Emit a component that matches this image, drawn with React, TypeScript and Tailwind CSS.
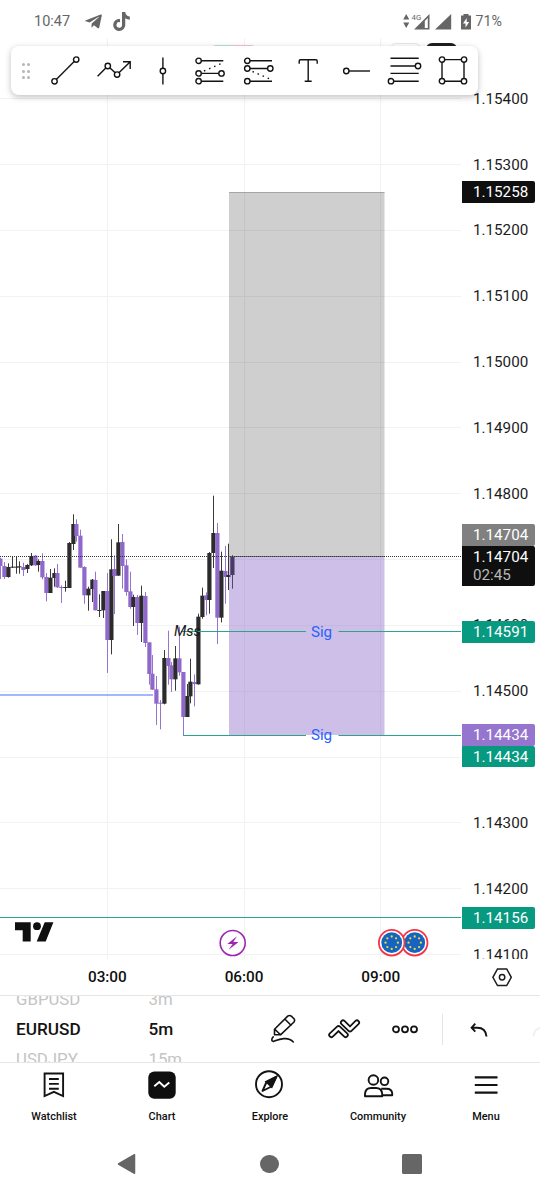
import React from 'react';
import { FaTelegramPlane } from 'react-icons/fa';
import { FaTiktok } from 'react-icons/fa6';

// --- CHART DATA ---
// [isUp, bodyTop, bodyBottom, high, low], in thirds of a pixel below CANDLE_BASE
type Candle = [number, number, number, number, number];

const CANDLES: Candle[] = [
    [0, 236, 258, 233, 297], [0, 258, 291, 246, 297], [1, 261, 291, 250, 293], [1, 260, 263, 230, 264],
    [1, 260, 263, 231, 281], [1, 259, 262, 244, 281], [0, 261, 270, 248, 288], [1, 255, 267, 252, 279],
    [1, 228, 256, 219, 258], [0, 227, 256, 225, 258], [1, 243, 255, 238, 275], [0, 243, 292, 220, 298],
    [0, 291, 339, 279, 364], [1, 293, 339, 267, 339], [1, 279, 294, 265, 320], [0, 279, 322, 252, 324],
    [0, 321, 324, 316, 369], [1, 321, 324, 302, 335], [1, 189, 324, 186, 324], [1, 132, 192, 103, 210],
    [0, 132, 168, 118, 185], [0, 167, 263, 149, 263], [0, 261, 346, 259, 371], [1, 326, 346, 320, 392],
    [1, 299, 327, 297, 366], [0, 300, 391, 275, 391], [1, 390, 393, 343, 411], [1, 333, 391, 333, 414],
    [0, 333, 480, 279, 579], [1, 268, 480, 178, 523], [0, 267, 288, 226, 402], [1, 187, 287, 132, 287],
    [0, 186, 258, 162, 326], [0, 256, 336, 238, 347], [0, 334, 381, 275, 386], [1, 351, 381, 344, 438],
    [0, 351, 429, 345, 465], [1, 347, 429, 317, 486], [0, 348, 489, 336, 501], [0, 487, 582, 487, 614],
    [0, 581, 629, 525, 630], [0, 628, 671, 588, 735], [0, 668, 671, 660, 748], [1, 534, 671, 510, 673],
    [0, 534, 558, 452, 614], [0, 556, 598, 546, 636], [1, 535, 598, 498, 632], [0, 535, 577, 440, 587],
    [0, 576, 711, 576, 768], [1, 648, 711, 612, 711], [1, 605, 649, 536, 670], [0, 606, 612, 583, 679],
    [1, 410, 613, 401, 614], [1, 347, 411, 323, 416], [0, 346, 360, 337, 406], [1, 219, 360, 216, 401],
    [1, 159, 219, 47, 264], [0, 159, 413, 129, 492], [1, 272, 413, 215, 427], [0, 273, 291, 198, 371],
    [1, 285, 291, 191, 330], [1, 229, 285, 226, 326],
];

const CANDLE_BASE = 480;
const CANDLE_STEP = 3.8;
const toY = (v: number) => CANDLE_BASE + v / 3;

const PRICES = [
    '1.15400', '1.15300', '1.15200', '1.15100', '1.15000', '1.14900', '1.14800',
    '1.14700', '1.14600', '1.14500', '1.14400', '1.14300', '1.14200', '1.14100',
];
const GRID_X = [107, 244, 380];

const EuFlag: React.FC<{ cx: number }> = ({ cx }) => (
    <g>
        <circle cx={cx} cy={942.7} r={12.8} fill="#fff" stroke="#f23645" strokeWidth={1.8} />
        <circle cx={cx} cy={942.7} r={10.4} fill="#1565c0" />
        {[0, 1, 2, 3, 4, 5, 6, 7].map(i => (
            <circle
                key={i}
                cx={cx + 6.2 * Math.cos((i * Math.PI) / 4)}
                cy={942.7 + 6.2 * Math.sin((i * Math.PI) / 4)}
                r={1.15}
                fill="#f5d33b"
            />
        ))}
    </g>
);

const Plot: React.FC = () => (
    <svg className="block h-[921px] w-[462px] shrink-0" viewBox="0 38 462 921">
        {/* Grid */}
        {PRICES.map((p, i) => (
            <rect key={p} x={0} y={Math.round(98.3 + i * 65.83)} width={461} height={1} fill="#f2f2f2" />
        ))}
        {GRID_X.map(x => (
            <rect key={x} x={x} y={38} width={1} height={921} fill="#f2f2f2" />
        ))}

        {/* Candles */}
        {CANDLES.map(([up, top, bottom, high, low], i) => {
            const x = Math.floor(0.95 + i * CANDLE_STEP);
            return (
                <g key={i}>
                    <rect x={x} y={toY(high)} width={1} height={(low - high) / 3} fill={up ? '#3a3a3a' : '#9575cd'} />
                    <rect x={x - 1.7} y={toY(top)} width={4.2} height={(bottom - top) / 3} fill={up ? '#2b2b2b' : '#9068cc'} />
                </g>
            );
        })}

        {/* Position box */}
        <rect x={229} y={192} width={155.5} height={365} fill="#0f0f0f" fillOpacity={0.2} />
        <rect x={229} y={192} width={155.5} height={1} fill="#8a8a8a" fillOpacity={0.6} />
        <rect x={229} y={557} width={155.5} height={178} fill="#7e57c2" fillOpacity={0.38} />
        <rect x={229} y={556} width={155.5} height={1} fill="#777" />
        <line x1={0} x2={461} y1={556.5} y2={556.5} stroke="#333" strokeWidth={1} strokeDasharray="1 1" />

        {/* Levels */}
        <rect x={0} y={694.5} width={153} height={1} fill="#4673fb" />
        <path d="M181 631.5H306M338.5 631.5H461M183 735.5H306M338.5 735.5H461M0 917.5H461" stroke="#2ba48d" strokeWidth={1.1} />
        <text x={321.5} y={637} textAnchor="middle" fontSize={15.2} fill="#2962ff" fontFamily="Roboto, sans-serif">Sig</text>
        <text x={321.5} y={740.4} textAnchor="middle" fontSize={15.2} fill="#2962ff" fontFamily="Roboto, sans-serif">Sig</text>
        <text x={174} y={635.5} fontSize={14.5} fontStyle="italic" fill="#1a1a1a" fontFamily="Roboto, sans-serif">Mss</text>

        {/* Logo */}
        <g fill="#0f0f0f">
            <path d="M15 922.3H30.7V941.5H22.7V930.3H15ZM44.7 922.3H53.4L45.7 941.5H36.7Z" />
            <circle cx={37} cy={926.2} r={3.9} />
        </g>

        {/* Events */}
        <circle cx={232.7} cy={943} r={12.5} fill="#fff" stroke="#9c27b0" strokeWidth={1.6} />
        <path d="M237 936.3L227.3 944H232.6L228.6 949.8L238.6 942H233.3Z" fill="#9c27b0" />
        <EuFlag cx={414.7} />
        <EuFlag cx={391.7} />
    </svg>
);

const BADGES = [
    { cls: 'top-[143px] h-[22px] bg-[#0f0f0f]', price: '1.15258' },
    { cls: 'top-[486px] h-[22px] bg-[#808080]', price: '1.14704' },
    { cls: 'top-[508px] h-[40px] bg-[#0f0f0f]', price: '1.14704', timer: '02:45' },
    { cls: 'top-[583px] h-[22px] bg-[#089981]', price: '1.14591' },
    { cls: 'top-[686px] h-[22px] bg-[#9575cd]', price: '1.14434' },
    { cls: 'top-[708px] h-[21px] bg-[#089981]', price: '1.14434' },
    { cls: 'top-[869px] h-[22px] bg-[#089981]', price: '1.14156' },
];

const PriceAxis: React.FC = () => (
    <div className="relative h-full w-[78px] overflow-hidden bg-white pt-[28.5px] text-[15.2px] text-[#1c1c1c]">
        {PRICES.map(p => (
            <div key={p} className="flex h-[65.83px] items-center pl-[11px] leading-none">
                <span>{p === '1.14700' || p === '1.14400' ? '' : p}</span>
            </div>
        ))}
        {BADGES.map((b, i) => (
            <div key={i} className={`absolute left-0 w-[72.5px] rounded-r-[2px] pl-[11px] leading-[23.5px] text-white ${b.cls}`}>
                {b.price}
                {b.timer && <div className="-mt-[5.5px] text-[#b8b8b8]">{b.timer}</div>}
            </div>
        ))}
    </div>
);

// --- STATUS BAR ---
const StatusBar: React.FC = () => (
    <div className="flex h-[38px] shrink-0 items-center pt-[5px] pl-[34px] text-[14.5px] text-[#666]">
        <span className="w-[50px]">10:47</span>
        <FaTelegramPlane className="h-[19px] w-[19px]" />
        <FaTiktok className="ml-[8.5px] h-[19px] w-[19px]" />
        <svg className="ml-[272px] h-5 w-[73px] shrink-0" viewBox="0 0 73 20" fill="#666">
            <path d="M3.2 2L6.3 7.6H.2ZM3.2 16L6.3 10.4H.2Z" />
            <path d="M11 17.5L26.5 2V17.5ZM21.8 9V16H24.8V6Z" fillRule="evenodd" />
            <path d="M32 17.5H48.2V2Z" />
            <path d="M60.5 2H65.5V3.6H68V17.5H58V3.6H60.5Z" />
            <path d="M63.7 6L60 11.5H62.5V15.5L66.2 10H63.7Z" fill="#fff" />
            <text x={8.5} y={7.6} fontSize={7.8} fontFamily="Roboto, sans-serif">4G</text>
        </svg>
        <span className="text-[14.2px]">71%</span>
    </div>
);

// --- DRAWING TOOLBAR ---
const Dot: React.FC<{ x: number, y: number }> = ({ x, y }) => (
    <circle cx={x} cy={y} r={2.7} fill="#fff" />
);

const TOOLS: React.ReactNode[] = [
    <><path d="M3.5 24.3L25.2 2.6" /><Dot x={3.5} y={24.3} /><Dot x={25.2} y={2.6} /></>,
    <><path d="M-1.4 19.3L8.8 9L18.1 17.6L31 5M24 4.8H31.2V12" /><Dot x={8.8} y={9} /><Dot x={18.1} y={17.6} /></>,
    <><path d="M14.9 .6V27.6" /><Dot x={14.9} y={14} /></>,
    <>
        <path d="M2.6 3.8H27.3M2.6 16.4H25.5M2.6 24.2H27.3" />
        <path d="M8 14L27 5.8" strokeDasharray="1.5 4" />
        <Dot x={2.6} y={3.8} /><Dot x={2.6} y={16.4} /><Dot x={25.5} y={16.4} /><Dot x={2.6} y={24.2} />
    </>,
    <>
        <path d="M2.3 3.8H27M2.3 11.5H25.3M2.3 24.2H27" />
        <path d="M7.5 14.5L26 22.5" strokeDasharray="1.5 4" />
        <Dot x={2.3} y={3.8} /><Dot x={2.3} y={11.5} /><Dot x={25.3} y={11.5} /><Dot x={2.3} y={24.2} />
    </>,
    <path d="M6.2 6.8V4Q6.2 2.8 7.4 2.8H23Q24.2 2.8 24.2 4V6.8M15.2 2.8V24.2M11.7 24.2H18.7" />,
    <><path d="M5.3 14H29" /><Dot x={5.3} y={14} /></>,
    <><path d="M.5 1.2H28.7M.5 9H28M.5 16.4H28.7M1 24.2H28.7" /><Dot x={28} y={9} /><Dot x={1} y={24.2} /></>,
    <><path d="M4 2.6H26V24.2H4Z" /><Dot x={4} y={2.6} /><Dot x={26} y={2.6} /><Dot x={26} y={24.2} /><Dot x={4} y={24.2} /></>,
];

const DrawingToolbar: React.FC = () => (
    <div className="absolute top-[46px] left-[11px] flex h-[49px] w-[467px] items-center rounded-lg bg-white pt-[1.5px] pl-[10px] shadow-[0_2px_6px_rgba(0,0,0,0.25)]">
        <div className="mr-[20px] grid h-[16px] w-[10px] grid-cols-2 content-between justify-between">
            {[0, 1, 2, 3, 4, 5].map(i => (
                <span key={i} className="h-[3px] w-[3px] justify-self-center rounded-full bg-[#b5b5b5]" />
            ))}
        </div>
        <div className="flex gap-[20.4px]">
            {TOOLS.map((tool, i) => (
                <svg key={i} className="h-7 w-7 shrink-0 overflow-visible" viewBox="0 0 28 28" fill="none" stroke="#131313" strokeWidth={1.4}>
                    {tool}
                </svg>
            ))}
        </div>
    </div>
);

// --- TIME AXIS ---
const TimeAxis: React.FC = () => (
    <div className="flex h-[36px] shrink-0 items-center pt-[1.5px] text-[15.3px] font-medium text-[#0f0f0f]">
        <span className="ml-[39px] w-[136.7px] text-center">03:00</span>
        <span className="w-[136.7px] text-center">06:00</span>
        <span className="w-[136.7px] text-center">09:00</span>
        <svg className="mb-px ml-[42.5px] h-5 w-5" viewBox="0 0 20 20" fill="none" stroke="#1c1c1c" strokeWidth={1.5}>
            <path d="M5.5 2H14.7L19.3 10.3L14.7 18.5H5.5L.9 10.3Z" />
            <circle cx={10.1} cy={10.3} r={2.7} />
        </svg>
    </div>
);

// --- SYMBOL BAR ---
const Wheel: React.FC<{ items: string[], width: string }> = ({ items, width }) => (
    <div className={`flex h-full shrink-0 flex-col justify-center leading-[30px] whitespace-nowrap ${width}`}>
        <span className="text-[16.8px] text-[#c4c4c4]">{items[0]}</span>
        <span className="text-[17.2px] font-medium text-[#131313]">{items[1]}</span>
        <span className="text-[16.8px] text-[#c4c4c4]">{items[2]}</span>
    </div>
);

const SymbolBar: React.FC = () => (
    <div className="flex h-[68px] shrink-0 items-center overflow-hidden border-y border-[#e6e6e6] pl-4">
        <Wheel items={['GBPUSD', 'EURUSD', 'USDJPY']} width="w-[132.5px]" />
        <Wheel items={['3m', '5m', '15m']} width="w-[121.5px]" />
        <svg className="mb-0.5 h-7 w-7 shrink-0 overflow-visible" viewBox="0 0 28 28" fill="none" stroke="#131313" strokeWidth={1.6} strokeLinecap="round" strokeLinejoin="round">
            <path d="M4.5 20.8V15.2L17.7 2.1Q19.5 .8 21.3 2.1L24 4.8Q25.2 6.3 24 8L10.5 20.8ZM14.8 5L21 11.2M4.8 15.2L10.5 20.8" />
            <path d="M3.2 22.9C1 25 1.5 28 4 27.2C9 25.4 18 22 23.3 28" />
        </svg>
        <svg className="mb-0.5 ml-8 h-7 w-7 shrink-0 overflow-visible" viewBox="0 0 28 28" fill="none" strokeLinecap="round" strokeLinejoin="round">
            <path d="M13 8.5L20 15.3L27 8.5" stroke="#131313" strokeWidth={6} />
            <path d="M13 8.5L20 15.3L27 8.5" stroke="#fff" strokeWidth={2.5} />
            <path d="M1.3 21L8.5 14.2L15.7 21" stroke="#131313" strokeWidth={6} />
            <path d="M1.3 21L8.5 14.2L15.7 21" stroke="#fff" strokeWidth={2.5} />
        </svg>
        <svg className="mb-px ml-[33px] h-7 w-7 shrink-0" viewBox="0 0 28 28" fill="none" stroke="#131313" strokeWidth={1.8}>
            <circle cx={5} cy={14.3} r={3} />
            <circle cx={14} cy={14.3} r={3} />
            <circle cx={23} cy={14.3} r={3} />
        </svg>
        <div className="ml-[22.5px] h-[31px] w-px shrink-0 bg-[#e4e4e4]" />
        <svg className="ml-[25.5px] h-7 w-7 shrink-0" viewBox="0 0 28 28" fill="none" stroke="#131313" strokeWidth={1.9}>
            <path d="M7.3 8.7L3.6 12.7L7.3 16.6M3.8 12.7H9.3C15.3 12.7 18 15.5 18.5 21.5" />
        </svg>
        <svg className="ml-[36px] h-7 w-7 shrink-0" viewBox="0 0 28 28" fill="none" stroke="#f0f0f0" strokeWidth={1.9}>
            <path d="M1.5 21.5C2 15.5 5.5 12.7 11.5 12.7H17" />
        </svg>
    </div>
);

// --- BOTTOM NAV ---
const NAV: { label: string, icon: React.ReactNode }[] = [
    {
        label: 'Watchlist',
        icon: <path d="M4.6 2.5H23.1V25L13.9 20.9L4.6 25ZM9 8H18.8M9 12.9H18.8M9 17.8H18.8" />,
    },
    {
        label: 'Chart',
        icon: <><rect x={.3} y={.5} width={27.4} height={27.3} rx={6} fill="#0f0f0f" stroke="none" /><path d="M6.3 15.3L11.3 11L16.3 15.7L21.3 11.5" stroke="#fff" /></>,
    },
    {
        label: 'Explore',
        icon: <><circle cx={13} cy={13.2} r={13} /><path d="M20 6L10.5 11L6.5 20L15.5 15.5Z" strokeLinejoin="round" /><path d="M20.5 5.5L10.2 10.8L15.7 15.9Z" fill="#131313" /></>,
    },
    {
        label: 'Community',
        icon: (
            <>
                <circle cx={9.4} cy={9} r={4.8} />
                <circle cx={20.5} cy={10.3} r={3.8} />
                <path d="M1 25.3V23Q1.4 17 7 17H12Q17.8 17 18.2 23V25.3ZM17.3 17.8H22.5Q28 17.8 28.2 22.5V24.3H18.2" strokeLinejoin="round" />
            </>
        ),
    },
    { label: 'Menu', icon: <path d="M2.8 6.3H25.5M2.8 14H25.5M2.8 21.6H25.5" strokeWidth={2.2} /> },
];

const BottomNav: React.FC = () => (
    <div className="flex h-[67px] shrink-0 pt-[7.5px]">
        {NAV.map(item => (
            <div key={item.label} className="flex w-[108px] flex-col items-center text-[#0f0f0f]">
                <svg className="h-7 w-7 shrink-0 overflow-visible" viewBox="0 0 28 28" fill="none" stroke="#131313" strokeWidth={1.9}>
                    {item.icon}
                </svg>
                <span className="mt-[10.5px] text-[10.9px] leading-4 font-medium">{item.label}</span>
            </div>
        ))}
    </div>
);

const SystemNav: React.FC = () => (
    <div className="flex grow items-center justify-between pr-[118.5px] pb-[2px] pl-[116.5px]">
        <svg className="h-[22px] w-5" viewBox="0 0 20 22" fill="#666" stroke="#666" strokeWidth={1.5} strokeLinejoin="round">
            <path d="M1.5 11L17.5 1.7V20.3Z" />
        </svg>
        <div className="h-[18.5px] w-[18.5px] rounded-full bg-[#666]" />
        <div className="h-[19.5px] w-[19.5px] rounded-[1.5px] bg-[#666]" />
    </div>
);

export default function App() {
    return (
        <div className="relative flex h-[1200px] w-[540px] flex-col overflow-hidden bg-white font-[Roboto,sans-serif]">
            <StatusBar />
            <div className="relative flex h-[921px] shrink-0">
                <Plot />
                <PriceAxis />
                {/* Header controls peeking out above the toolbar */}
                <div className="absolute top-[7px] left-[212px] flex h-3 w-[43px] overflow-hidden rounded-t-sm">
                    <span className="w-1/2 bg-[#b9e3dc]" />
                    <span className="w-1/2 bg-[#fbc4ce]" />
                </div>
                <div className="absolute top-[5px] left-[390px] h-4 w-[31px] rounded-md border border-[#e6e6e6] bg-white" />
                <div className="absolute top-[5px] left-[426px] h-4 w-[31px] rounded-md bg-[#1f1f1f]" />
            </div>
            <TimeAxis />
            <SymbolBar />
            <BottomNav />
            <SystemNav />
            <DrawingToolbar />
        </div>
    );
}
